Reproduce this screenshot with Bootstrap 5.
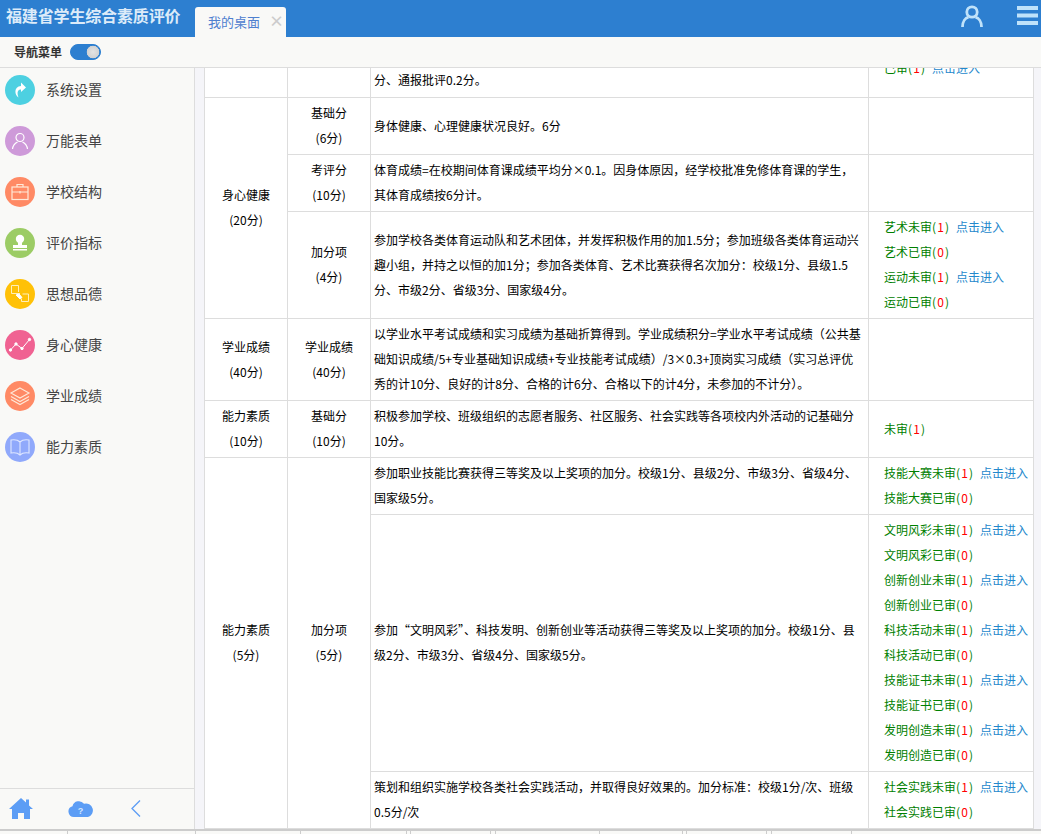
<!DOCTYPE html>
<html lang="zh">
<head>
<meta charset="utf-8">
<title>福建省学生综合素质评价</title>
<link href="https://cdn.jsdelivr.net/npm/bootstrap@5.3.0/dist/css/bootstrap.min.css" rel="stylesheet">
<style>
html,body{height:100%}
body{font-family:"Noto Sans CJK SC","Liberation Sans",sans-serif;font-size:12px;color:#000;background:#f9f9f7;overflow:hidden}
.topbar{height:37px;background:#2d7fd0;padding:0}
.site-title{font-size:16px;font-weight:700;color:#dcebf9;padding-left:6px;line-height:31px;width:195px;white-space:nowrap;letter-spacing:-.15px}
.desk-tab{width:91px;height:30px;margin-top:7px;background:#f9f9f7;border-radius:3px 3px 0 0;padding-left:13px;line-height:28px;font-size:13px;color:#4f80cf}
.desk-tab span{color:#ccc;font-size:15px;font-weight:700;margin-left:9px}
.subbar{height:31px;border-bottom:1px solid #ddd;padding-left:14px;gap:8px;font-weight:700;color:#333}
.subbar .form-switch{padding:0;margin:0;min-height:0;height:16px}
.subbar .form-check-input{margin:0;float:none;display:block;width:31px;height:16px;background-color:#2d7fd0;border-color:#2d7fd0;background-image:radial-gradient(circle at 22px 7px,#e4e4e4 0,#d2d2d2 6px,transparent 6.6px);background-position:0 0;background-size:auto}
.side{width:195px;border-right:1px solid #ddd;flex:none}
.side-scroll{overflow:hidden}
.side-list{margin-top:-4px}
.side-item{height:51px;padding-left:5px;gap:11px;font-size:14px;color:#444;background:transparent;border:0;border-radius:0}
.disc{width:30px;height:30px;border-radius:50%;flex:none}
.c1{background:#4dd0e1}.c2{background:#ce9ad9}.c3{background:#ff8a65}.c4{background:#9ccc65}.c5{background:#ffc107}.c6{background:#f06292}.c7{background:#ff8a65}.c8{background:#90a9fb}
.side-foot{height:41px;border-top:1px solid #ddd;padding:0 0 0 9px;flex:none}
.side-foot svg{display:block}
.pane{background:#f5f5f9;overflow:hidden;padding-left:9px;padding-right:7px}
.score{table-layout:fixed;width:830px;margin:-16px 0 0;background:#fff;border-color:#ddd;font-size:12px;--bs-table-bg:#fff}
.score td{padding:2px 3px 4px;line-height:25px;vertical-align:middle;color:#000;border-color:#ddd;background:#fff;white-space:nowrap}
.score .mid{text-align:center}
.score .w1{width:83px}.score .w3{width:498px}
.score .st{padding-left:15px;color:#008000}
.score .bot{vertical-align:bottom;padding-bottom:5px}
.score .st.clipline{padding-bottom:17px;vertical-align:bottom}
.cnt{letter-spacing:1.1px;margin-right:6px}
.cnt i{font-style:normal;color:#f00}
.go{color:#2488cc;text-decoration:none}
.strip{height:5px;border-top:2px solid #ccc;display:grid;grid-template-columns:68px 128px 105px 106px 4px 80px 5px 104px 83px 4px 80px 5px 80px 1fr;flex:none}
.strip div{border-right:1px solid #ccc}
.strip div:last-child{border:0}
</style>
</head>
<body class="d-flex flex-column">
<header class="topbar d-flex align-items-start flex-none">
  <div class="site-title">福建省学生综合素质评价</div>
  <div class="desk-tab">我的桌面<span>×</span></div>
  <div class="ms-auto d-flex align-items-start">
    <svg width="24" height="24" viewBox="0 0 24 24" style="margin:4px 33px 0 0" fill="none" stroke="#bfe2fa" stroke-width="2.800"><circle cx="12" cy="8" r="5.200"/><path d="M2.500 23c0-5.500 3-9 6-9.800M21.500 23c0-5.500-3-9-6-9.800"/></svg>
    <svg width="21" height="19" viewBox="0 0 21 19" style="margin:6px 3px 0 0" fill="#bfe2fa"><rect width="21" height="4"/><rect y="7.500" width="21" height="4"/><rect y="15" width="21" height="4"/></svg>
  </div>
</header>
<div class="subbar d-flex align-items-center flex-none">
  <span>导航菜单</span>
  <div class="form-check form-switch"><input class="form-check-input" type="checkbox" role="switch" checked aria-label="导航菜单"></div>
</div>
<div class="d-flex flex-fill" style="min-height:0">
  <aside class="side d-flex flex-column">
    <div class="side-scroll flex-fill">
      <div class="list-group side-list">
        <a class="list-group-item side-item d-flex align-items-center" href="#"><span class="disc c1 d-flex align-items-center justify-content-center"><svg width="18" height="20" viewBox="0 0 18 20"><path d="M10 2.500l5 5-5 4.500V9.500C7 9.500 5.500 12 7.500 17.500 3.500 15 2.500 6.500 10 6z" fill="#fff"/></svg></span>系统设置</a>
        <a class="list-group-item side-item d-flex align-items-center" href="#"><span class="disc c2 d-flex align-items-center justify-content-center"><svg width="20" height="20" viewBox="0 0 20 20" fill="none" stroke="#fff" stroke-width="1.200"><circle cx="10" cy="6.500" r="4"/><path d="M2.500 18c.5-4.500 3-6 5-7M17.500 18c-.5-4.500-3-6-5-7"/></svg></span>万能表单</a>
        <a class="list-group-item side-item d-flex align-items-center" href="#"><span class="disc c3 d-flex align-items-center justify-content-center"><svg width="20" height="20" viewBox="0 0 20 20" fill="none" stroke="#ffe9d8" stroke-width="1.200"><rect x="2" y="5" width="16" height="12.500"/><path d="M7 5V2.500h6V5M2 10h16M10 9v2.500"/></svg></span>学校结构</a>
        <a class="list-group-item side-item d-flex align-items-center" href="#"><span class="disc c4 d-flex align-items-center justify-content-center"><svg width="20" height="20" viewBox="0 0 20 20" fill="#fff"><circle cx="10" cy="6" r="4.200"/><rect x="8" y="8" width="4" height="5"/><rect x="3" y="12" width="14" height="3"/><rect x="3" y="16" width="14" height="1.500"/></svg></span>评价指标</a>
        <a class="list-group-item side-item d-flex align-items-center" href="#"><span class="disc c5 d-flex align-items-center justify-content-center"><svg width="20" height="20" viewBox="0 0 20 20" fill="none" stroke="#ffeeb8" stroke-width="1"><path d="M10 9.500H1.500v-8h7V8M12.500 10h6v7.500h-7V15"/><path d="M6 11l4 4 2-1.500-3-3.500z" fill="#fff" stroke="#fff"/></svg></span>思想品德</a>
        <a class="list-group-item side-item d-flex align-items-center" href="#"><span class="disc c6 d-flex align-items-center justify-content-center"><svg width="24" height="18" viewBox="0 0 24 18" fill="#fff" stroke="#fff"><path d="M2.500 14l5.500-6 6 4.500 7.500-9" fill="none" stroke-width="1"/><circle cx="2.500" cy="14" r="1.200"/><circle cx="8" cy="8" r="1.200"/><circle cx="14" cy="12.500" r="1.200"/><circle cx="21.500" cy="3.500" r="1.200"/></svg></span>身心健康</a>
        <a class="list-group-item side-item d-flex align-items-center" href="#"><span class="disc c7 d-flex align-items-center justify-content-center"><svg width="22" height="20" viewBox="0 0 22 20" fill="none" stroke="#ffe9d8" stroke-width="1.100"><path d="M11 2l9 5-9 5-9-5zM2 10.500l9 5 9-5M2 13.500l9 5 9-5"/></svg></span>学业成绩</a>
        <a class="list-group-item side-item d-flex align-items-center" href="#"><span class="disc c8 d-flex align-items-center justify-content-center"><svg width="22" height="20" viewBox="0 0 22 20" fill="none" stroke="#dfe7ff" stroke-width="1.100"><path d="M11 5C9 3 5 2.500 2 3v13c3-.5 7 0 9 2 2-2 6-2.500 9-2V3c-3-.5-7 0-9 2zM11 5v13"/></svg></span>能力素质</a>
      </div>
    </div>
    <div class="side-foot d-flex align-items-center">
      <svg width="24" height="22" viewBox="0 0 24 22" fill="#5c9df5" style="margin-top:-1px"><path d="M0 11L12 0l5 4.500V1.500h3v6L24 11h-3v10h-6v-6H9v6H3V11z"/></svg>
      <svg width="25" height="16" viewBox="0 0 25 16" style="margin:-1px 0 0 35px"><path d="M6 16a5.500 5.500 0 0 1-1.500-10.800A6.500 6.500 0 0 1 16 2.800 5.500 5.500 0 0 1 20 16z" fill="#5c9df5"/><text x="12.500" y="12.500" font-size="9" font-weight="700" fill="#d5e6fd" text-anchor="middle" font-family="Liberation Sans">?</text></svg>
      <svg width="10" height="17" viewBox="0 0 10 17" style="margin:-1px 0 0 38px" fill="none" stroke="#5c9df5" stroke-width="1.300"><path d="M9 .5L1 8.500l8 8"/></svg>
    </div>
  </aside>
  <main class="pane flex-fill">
    <table class="table table-bordered score">
      <colgroup><col class="w1"><col class="w1"><col class="w3"><col></colgroup>
      <tbody>
        <tr><td></td><td></td><td class="bot">分、通报批评0.2分。</td><td class="st clipline">已审<span class="cnt">(<i>1</i>)</span><a class="go" href="#">点击进入</a></td></tr>
        <tr><td class="mid" rowspan="3">身心健康<br>(20分)</td><td class="mid">基础分<br>(6分)</td><td>身体健康、心理健康状况良好。6分</td><td></td></tr>
        <tr><td class="mid">考评分<br>(10分)</td><td>体育成绩=在校期间体育课成绩平均分×0.1。因身体原因，经学校批准免修体育课的学生，<br>其体育成绩按6分计。</td><td></td></tr>
        <tr><td class="mid">加分项<br>(4分)</td><td>参加学校各类体育运动队和艺术团体，并发挥积极作用的加1.5分；参加班级各类体育运动兴<br>趣小组，并持之以恒的加1分；参加各类体育、艺术比赛获得名次加分：校级1分、县级1.5<br>分、市级2分、省级3分、国家级4分。</td><td class="st">艺术未审<span class="cnt">(<i>1</i>)</span><a class="go" href="#">点击进入</a><br>艺术已审<span class="cnt">(<i>0</i>)</span><br>运动未审<span class="cnt">(<i>1</i>)</span><a class="go" href="#">点击进入</a><br>运动已审<span class="cnt">(<i>0</i>)</span></td></tr>
        <tr><td class="mid">学业成绩<br>(40分)</td><td class="mid">学业成绩<br>(40分)</td><td>以学业水平考试成绩和实习成绩为基础折算得到。学业成绩积分=学业水平考试成绩（公共基<br>础知识成绩/5+专业基础知识成绩+专业技能考试成绩）/3×0.3+顶岗实习成绩（实习总评优<br>秀的计10分、良好的计8分、合格的计6分、合格以下的计4分，未参加的不计分）。</td><td></td></tr>
        <tr><td class="mid">能力素质<br>(10分)</td><td class="mid">基础分<br>(10分)</td><td>积极参加学校、班级组织的志愿者服务、社区服务、社会实践等各项校内外活动的记基础分<br>10分。</td><td class="st">未审<span class="cnt">(<i>1</i>)</span></td></tr>
        <tr><td class="mid" rowspan="3">能力素质<br>(5分)</td><td class="mid" rowspan="3">加分项<br>(5分)</td><td>参加职业技能比赛获得三等奖及以上奖项的加分。校级1分、县级2分、市级3分、省级4分、<br>国家级5分。</td><td class="st">技能大赛未审<span class="cnt">(<i>1</i>)</span><a class="go" href="#">点击进入</a><br>技能大赛已审<span class="cnt">(<i>0</i>)</span></td></tr>
        <tr><td>参加“文明风彩”、科技发明、创新创业等活动获得三等奖及以上奖项的加分。校级1分、县<br>级2分、市级3分、省级4分、国家级5分。</td><td class="st">文明风彩未审<span class="cnt">(<i>1</i>)</span><a class="go" href="#">点击进入</a><br>文明风彩已审<span class="cnt">(<i>0</i>)</span><br>创新创业未审<span class="cnt">(<i>1</i>)</span><a class="go" href="#">点击进入</a><br>创新创业已审<span class="cnt">(<i>0</i>)</span><br>科技活动未审<span class="cnt">(<i>1</i>)</span><a class="go" href="#">点击进入</a><br>科技活动已审<span class="cnt">(<i>0</i>)</span><br>技能证书未审<span class="cnt">(<i>1</i>)</span><a class="go" href="#">点击进入</a><br>技能证书已审<span class="cnt">(<i>0</i>)</span><br>发明创造未审<span class="cnt">(<i>1</i>)</span><a class="go" href="#">点击进入</a><br>发明创造已审<span class="cnt">(<i>0</i>)</span></td></tr>
        <tr><td>策划和组织实施学校各类社会实践活动，并取得良好效果的。加分标准：校级1分/次、班级<br>0.5分/次</td><td class="st">社会实践未审<span class="cnt">(<i>1</i>)</span><a class="go" href="#">点击进入</a><br>社会实践已审<span class="cnt">(<i>0</i>)</span></td></tr>
      </tbody>
    </table>
  </main>
</div>
<div class="strip"><div></div><div></div><div></div><div></div><div></div><div></div><div></div><div></div><div></div><div></div><div></div><div></div><div></div><div></div></div>
<script src="https://cdn.jsdelivr.net/npm/bootstrap@5.3.0/dist/js/bootstrap.bundle.min.js"></script>
</body>
</html>
